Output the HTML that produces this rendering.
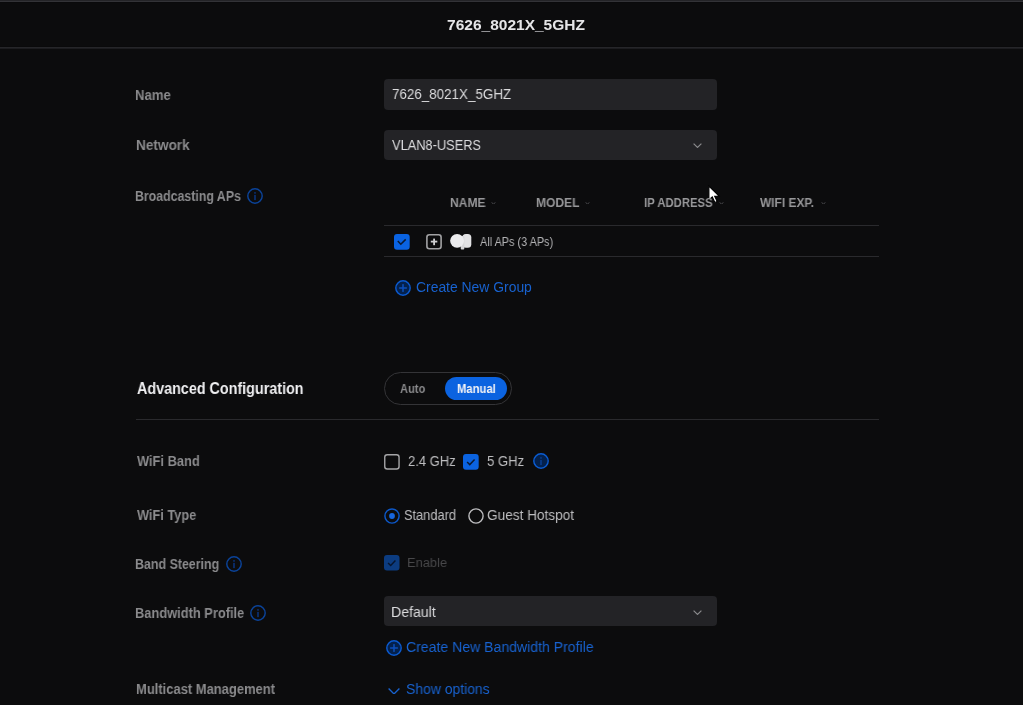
<!DOCTYPE html>
<html><head><meta charset="utf-8"><title>7626_8021X_5GHZ</title>
<style>
html,body{margin:0;padding:0;}
body{width:1023px;height:705px;overflow:hidden;background:#0c0c0d;position:relative;font-family:"Liberation Sans",sans-serif;}
.t{position:absolute;white-space:nowrap;transform-origin:0 0;z-index:2;will-change:transform;}
.a{position:absolute;display:block;}
</style></head><body>
<div class="a" style="left:0;top:0;width:1023px;height:1px;background:#242427"></div><div class="a" style="left:0;top:1px;width:1023px;height:1px;background:#333337"></div><div class="a" style="left:0;top:2px;width:1023px;height:1px;background:#0a0a0b"></div>
<div class="a" style="left:0;top:46px;width:1023px;height:1px;background:#0a0a0b"></div><div class="a" style="left:0;top:47px;width:1023px;height:1px;background:#262629"></div><div class="a" style="left:0;top:48px;width:1023px;height:1px;background:#1c1c1f"></div>
<div class="t" id="title" style="left:447.40px;top:16.77px;font-size:15.40px;line-height:15.40px;color:#e6e6e8;font-weight:700;transform:scaleX(1.0077)">7626_8021X_5GHZ</div>
<div class="t" id="l_name" style="left:135.22px;top:87.60px;font-size:14.41px;line-height:14.41px;color:#8b8b8d;font-weight:700;transform:scaleX(0.9113)">Name</div>
<div class="t" id="l_network" style="left:136.18px;top:138.24px;font-size:14.12px;line-height:14.12px;color:#8b8b8d;font-weight:700;transform:scaleX(0.9651)">Network</div>
<div class="t" id="l_bap" style="left:135.22px;top:188.92px;font-size:14.27px;line-height:14.27px;color:#8b8b8d;font-weight:700;transform:scaleX(0.8651)">Broadcasting APs</div>
<div class="t" id="l_band" style="left:136.95px;top:453.82px;font-size:14.27px;line-height:14.27px;color:#8b8b8d;font-weight:700;transform:scaleX(0.9006)">WiFi Band</div>
<div class="t" id="l_type" style="left:136.97px;top:508.32px;font-size:14.27px;line-height:14.27px;color:#8b8b8d;font-weight:700;transform:scaleX(0.8959)">WiFi Type</div>
<div class="t" id="l_steer" style="left:135.06px;top:556.92px;font-size:14.27px;line-height:14.27px;color:#8b8b8d;font-weight:700;transform:scaleX(0.8702)">Band Steering</div>
<div class="t" id="l_bw" style="left:135.02px;top:606.02px;font-size:14.27px;line-height:14.27px;color:#8b8b8d;font-weight:700;transform:scaleX(0.9011)">Bandwidth Profile</div>
<div class="t" id="l_multi" style="left:135.81px;top:682.42px;font-size:14.27px;line-height:14.27px;color:#8b8b8d;font-weight:700;transform:scaleX(0.9087)">Multicast Management</div>
<div class="t" id="adv" style="left:136.82px;top:379.95px;font-size:16.24px;line-height:16.24px;color:#f0f0f2;font-weight:700;transform:scaleX(0.8835)">Advanced Configuration</div>
<div class="t" id="in1" style="left:392.00px;top:86.50px;font-size:14.41px;line-height:14.41px;color:#dcdcde;font-weight:400;transform:scaleX(0.9300)">7626_8021X_5GHZ</div>
<div class="t" id="in2" style="left:392.00px;top:138.04px;font-size:14.12px;line-height:14.12px;color:#dcdcde;font-weight:400;transform:scaleX(0.9082)">VLAN8-USERS</div>
<div class="t" id="h_name" style="left:450.18px;top:196.56px;font-size:12.57px;line-height:12.57px;color:#98989a;font-weight:700;transform:scaleX(0.9613)">NAME</div>
<div class="t" id="h_model" style="left:535.54px;top:196.56px;font-size:12.57px;line-height:12.57px;color:#98989a;font-weight:700;transform:scaleX(0.9576)">MODEL</div>
<div class="t" id="h_ip" style="left:644.04px;top:196.56px;font-size:12.57px;line-height:12.57px;color:#98989a;font-weight:700;transform:scaleX(0.9019)">IP ADDRESS</div>
<div class="t" id="h_wifi" style="left:759.72px;top:196.56px;font-size:12.57px;line-height:12.57px;color:#98989a;font-weight:700;transform:scaleX(0.9481)">WIFI EXP.</div>
<div class="t" id="allaps" style="left:480.18px;top:236.10px;font-size:12.29px;line-height:12.29px;color:#b2b2b4;font-weight:400;transform:scaleX(0.8856)">All APs (3 APs)</div>
<div class="t" id="cng" style="left:416.00px;top:281.18px;font-size:13.84px;line-height:13.84px;color:#1862cf;font-weight:400;transform:scaleX(1.0049)">Create New Group</div>
<div class="t" id="auto" style="left:400.00px;top:383.18px;font-size:12.43px;line-height:12.43px;color:#8a8a8c;font-weight:700;transform:scaleX(0.8952)">Auto</div>
<div class="t" id="manual" style="left:457.00px;top:383.18px;font-size:12.43px;line-height:12.43px;color:#f4f4f6;font-weight:700;transform:scaleX(0.9079)">Manual</div>
<div class="t" id="g24" style="left:407.99px;top:455.18px;font-size:13.84px;line-height:13.84px;color:#bdbdbf;font-weight:400;transform:scaleX(0.9408)">2.4 GHz</div>
<div class="t" id="g5" style="left:487.00px;top:455.18px;font-size:13.84px;line-height:13.84px;color:#bdbdbf;font-weight:400;transform:scaleX(0.9487)">5 GHz</div>
<div class="t" id="std" style="left:403.65px;top:508.30px;font-size:14.41px;line-height:14.41px;color:#bdbdbf;font-weight:400;transform:scaleX(0.8883)">Standard</div>
<div class="t" id="guest" style="left:486.81px;top:508.30px;font-size:14.41px;line-height:14.41px;color:#bdbdbf;font-weight:400;transform:scaleX(0.9462)">Guest Hotspot</div>
<div class="t" id="enable" style="left:406.65px;top:556.10px;font-size:13.70px;line-height:13.70px;color:#48484a;font-weight:400;transform:scaleX(0.9414)">Enable</div>
<div class="t" id="default" style="left:390.78px;top:604.80px;font-size:14.41px;line-height:14.41px;color:#dcdcde;font-weight:400;transform:scaleX(0.9787)">Default</div>
<div class="t" id="cnbp" style="left:406.43px;top:639.99px;font-size:14.55px;line-height:14.55px;color:#1862cf;font-weight:400;transform:scaleX(0.9667)">Create New Bandwidth Profile</div>
<div class="t" id="show" style="left:406.42px;top:682.42px;font-size:14.27px;line-height:14.27px;color:#1862cf;font-weight:400;transform:scaleX(0.9768)">Show options</div>
<svg class="a" style="left:247px;top:188px" width="16" height="16" viewBox="0 0 16 16"><circle cx="8" cy="8" r="7.2" fill="none" stroke="#0b4399" stroke-width="1.45"/><rect x="7.25" y="6.9" width="1.5" height="5.2" fill="#0a3580"/><rect x="7.25" y="4.1" width="1.5" height="1.6" fill="#0a3580"/></svg>
<svg class="a" style="left:226px;top:555.7px" width="16" height="16" viewBox="0 0 16 16"><circle cx="8" cy="8" r="7.2" fill="none" stroke="#0b4399" stroke-width="1.45"/><rect x="7.25" y="6.9" width="1.5" height="5.2" fill="#0a3580"/><rect x="7.25" y="4.1" width="1.5" height="1.6" fill="#0a3580"/></svg>
<svg class="a" style="left:250px;top:604.6px" width="16" height="16" viewBox="0 0 16 16"><circle cx="8" cy="8" r="7.2" fill="none" stroke="#0b4399" stroke-width="1.45"/><rect x="7.25" y="6.9" width="1.5" height="5.2" fill="#0a3580"/><rect x="7.25" y="4.1" width="1.5" height="1.6" fill="#0a3580"/></svg>
<div class="a" style="left:384px;top:79px;width:333px;height:31px;background:#232326;border-radius:4px"></div>
<div class="a" style="left:384px;top:130px;width:333px;height:30px;background:#232326;border-radius:4px"></div>
<svg class="a" style="left:693px;top:143px" width="9" height="5" viewBox="0 0 9 5"><polyline points="0.6,0.6 4.5,4.4 8.4,0.6" fill="none" stroke="#8a8a8c" stroke-width="1.2"/></svg>
<svg class="a" style="left:490.5px;top:201.5px" width="5" height="2.5" viewBox="0 0 5 2.5"><polyline points="0.6,0.6 2.5,1.9 4.4,0.6" fill="none" stroke="#4a4a4d" stroke-width="1"/></svg>
<svg class="a" style="left:584.5px;top:201.5px" width="5" height="2.5" viewBox="0 0 5 2.5"><polyline points="0.6,0.6 2.5,1.9 4.4,0.6" fill="none" stroke="#4a4a4d" stroke-width="1"/></svg>
<svg class="a" style="left:718.5px;top:201.5px" width="5" height="2.5" viewBox="0 0 5 2.5"><polyline points="0.6,0.6 2.5,1.9 4.4,0.6" fill="none" stroke="#4a4a4d" stroke-width="1"/></svg>
<svg class="a" style="left:820.5px;top:201.5px" width="5" height="2.5" viewBox="0 0 5 2.5"><polyline points="0.6,0.6 2.5,1.9 4.4,0.6" fill="none" stroke="#4a4a4d" stroke-width="1"/></svg>
<div class="a" style="left:384px;top:225px;width:495px;height:1px;background:#2a2a2d"></div>
<svg class="a" style="left:394.4px;top:233.8px" width="15.7" height="15.8" viewBox="0 0 15.7 15.8"><rect x="0" y="0" width="15.7" height="15.8" rx="3" fill="#0a63e2"/><polyline points="3.8,7.1 6.8,10.2 11.7,5.4" fill="none" stroke="#0a1a33" stroke-width="1.5"/></svg>
<svg class="a" style="left:424px;top:232px" width="20" height="20" viewBox="424 232 20 20"><rect x="426.9" y="234.7" width="14.2" height="14.1" rx="2.5" fill="none" stroke="#a2a2a4" stroke-width="1.6"/></svg>
<svg class="a" style="left:426px;top:230px" width="16" height="20" viewBox="426 230 16 20"><rect x="433.2" y="238.6" width="1.8" height="6.6" fill="#cfcfd1"/><rect x="430.8" y="240.7" width="6.5" height="1.8" fill="#cfcfd1"/></svg>
<svg class="a" style="left:446px;top:230px" width="30" height="23" viewBox="0 0 30 23"><rect x="16.3" y="4.1" width="9" height="13.7" rx="3.5" fill="#e2e2e4"/><rect x="14.7" y="6" width="3.6" height="13.6" rx="1" fill="#d6d6d8"/><circle cx="11.1" cy="10.85" r="6.95" fill="#ececee"/></svg>
<div class="a" style="left:384px;top:256px;width:495px;height:1px;background:#2a2a2d"></div>
<svg class="a" style="left:395px;top:279.9px" width="16" height="16" viewBox="0 0 16 16"><circle cx="8" cy="8" r="7.2" fill="#04214c" stroke="#0b5ad0" stroke-width="1.45"/><rect x="7.25" y="4.1" width="1.5" height="7.8" fill="#0b4fbc"/><rect x="4.1" y="7.25" width="7.8" height="1.5" fill="#0b4fbc"/></svg>
<div class="a" style="left:384px;top:372px;width:126px;height:31px;border:1px solid #343437;border-radius:17px"></div>
<div class="a" style="left:445px;top:377px;width:62px;height:23px;background:#0b63e0;border-radius:12px"></div>
<div class="a" style="left:136px;top:419px;width:743px;height:1px;background:#2a2a2d"></div>
<svg class="a" style="left:382px;top:452px" width="20" height="20" viewBox="382 452 20 20"><rect x="384.75" y="454.75" width="14.3" height="14.3" rx="2.5" fill="none" stroke="#a5a5a7" stroke-width="1.4"/></svg>
<svg class="a" style="left:463px;top:454px" width="15.7" height="15.7" viewBox="0 0 16 16"><rect x="0" y="0" width="16" height="16" rx="3" fill="#0b63e0"/><polyline points="4.2,8.2 6.9,10.8 11.8,5.6" fill="none" stroke="#0b1a33" stroke-width="1.5"/></svg>
<svg class="a" style="left:533.4px;top:453.2px" width="16" height="16" viewBox="0 0 16 16"><circle cx="8" cy="8" r="7.2" fill="#04214c" stroke="#0b5cd2" stroke-width="1.45"/><rect x="7.25" y="6.9" width="1.5" height="5.2" fill="#083f92"/><rect x="7.25" y="4.1" width="1.5" height="1.6" fill="#083f92"/></svg>
<svg class="a" style="left:383.6px;top:508.3px" width="16" height="16" viewBox="0 0 16 16"><circle cx="8" cy="8" r="7.1" fill="none" stroke="#0d58c8" stroke-width="1.45"/><circle cx="8" cy="8" r="2.9" fill="#1766dc"/></svg>
<svg class="a" style="left:467.8px;top:508.3px" width="16" height="16" viewBox="0 0 16 16"><circle cx="8" cy="8" r="7.1" fill="none" stroke="#bdbdbf" stroke-width="1.4"/></svg>
<svg class="a" style="left:384px;top:555px" width="15.5" height="15.5" viewBox="0 0 16 16"><rect x="0" y="0" width="16" height="16" rx="3" fill="#0c3c80"/><polyline points="4.2,8.2 6.9,10.8 11.8,5.6" fill="none" stroke="#06152e" stroke-width="1.5"/></svg>
<div class="a" style="left:384px;top:596px;width:333px;height:30px;background:#232326;border-radius:4px"></div>
<svg class="a" style="left:693px;top:609.5px" width="9" height="5" viewBox="0 0 9 5"><polyline points="0.6,0.6 4.5,4.4 8.4,0.6" fill="none" stroke="#8a8a8c" stroke-width="1.2"/></svg>
<svg class="a" style="left:385.55px;top:639.9px" width="16" height="16" viewBox="0 0 16 16"><circle cx="8" cy="8" r="7.2" fill="#04214c" stroke="#0b5ad0" stroke-width="1.45"/><rect x="7.25" y="4.1" width="1.5" height="7.8" fill="#0b4fbc"/><rect x="4.1" y="7.25" width="7.8" height="1.5" fill="#0b4fbc"/></svg>
<svg class="a" style="left:387.5px;top:687.5px" width="12" height="6.5" viewBox="0 0 12 6.5"><polyline points="0.6,0.6 6.0,5.9 11.4,0.6" fill="none" stroke="#1862cf" stroke-width="1.4"/></svg>
<svg class="a" style="left:705px;top:183.2px" width="18" height="22" viewBox="-3.9 -3 18 22"><path d="M0,0 L0,14 L3.4,11 L6,16.4 L8.3,15.4 L5.8,10.3 L10.2,10.1 Z" fill="#ffffff" stroke="#000" stroke-width="1.1" stroke-linejoin="miter"/></svg>
</body></html>
